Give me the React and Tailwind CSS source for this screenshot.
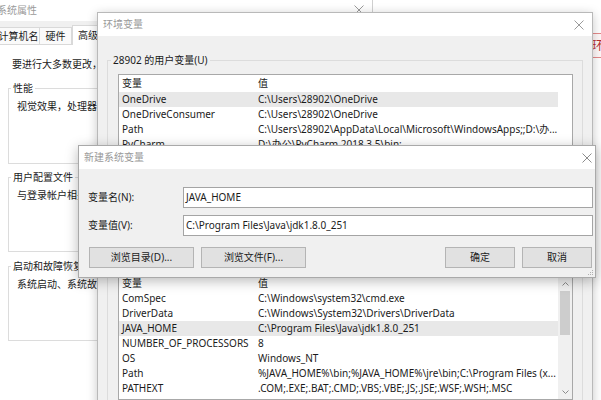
import React from 'react';

const userVars = [
  ['OneDrive', 'C:\\Users\\28902\\OneDrive', true],
  ['OneDriveConsumer', 'C:\\Users\\28902\\OneDrive'],
  ['Path', 'C:\\Users\\28902\\AppData\\Local\\Microsoft\\WindowsApps;;D:\\办...'],
  ['PyCharm', 'D:\\办公\\PyCharm 2018.3.5\\bin;'],
  ['TEMP', 'C:\\Users\\28902\\AppData\\Local\\Temp'],
  ['TMP', 'C:\\Users\\28902\\AppData\\Local\\Temp'],
];

const sysVars = [
  ['ComSpec', 'C:\\Windows\\system32\\cmd.exe'],
  ['DriverData', 'C:\\Windows\\System32\\Drivers\\DriverData'],
  ['JAVA_HOME', 'C:\\Program Files\\Java\\jdk1.8.0_251', true],
  ['NUMBER_OF_PROCESSORS', '8'],
  ['OS', 'Windows_NT'],
  ['Path', '%JAVA_HOME%\\bin;%JAVA_HOME%\\jre\\bin;C:\\Program Files (x...'],
  ['PATHEXT', '.COM;.EXE;.BAT;.CMD;.VBS;.VBE;.JS;.JSE;.WSF;.WSH;.MSC'],
  ['PROCESSOR_ARCHITECTURE', 'AMD64'],
];

const CloseX = ({ color = '#9a9a9a' }) => (
  <svg width="10" height="10" viewBox="0 0 10 10">
    <path d="M0.5 0.5L9.5 9.5M9.5 0.5L0.5 9.5" stroke={color} strokeWidth="1" />
  </svg>
);

const Scrollbar = () => (
  <div className="w-[14px] bg-[#f0f0f0] flex flex-col items-center">
    <div className="h-[15px] flex items-center justify-center">
      <svg width="7" height="4" viewBox="0 0 7 4"><path d="M0.5 3.5L3.5 0.5L6.5 3.5" stroke="#8a8a8a" fill="none" /></svg>
    </div>
    <div className="w-[10px] h-[44px] bg-[#cdcdcd]" />
    <div className="flex-1" />
    <div className="h-[15px] flex items-center justify-center">
      <svg width="7" height="4" viewBox="0 0 7 4"><path d="M0.5 0.5L3.5 3.5L6.5 0.5" stroke="#8a8a8a" fill="none" /></svg>
    </div>
  </div>
);

const VarList = ({ rows, className, scroll }) => (
  <div className={`flex border border-[#a8a8a8] bg-white overflow-hidden ${className}`}>
    <div className="w-[439px] shrink-0 flex flex-col">
      <div className="flex h-[17px] items-center">
        <div className="w-[136px] shrink-0 pl-[3px]">变量</div>
        <div className="pl-[3px] flex-1">值</div>
      </div>
      {rows.map(([n, v, sel]) => (
        <div key={n} className={`flex h-[15px] items-center whitespace-nowrap ${sel ? 'bg-[#e8e8e8]' : ''}`}>
          <div className="w-[136px] shrink-0 pl-[3px]">{n}</div>
          <div className="pl-[3px] flex-1 overflow-hidden">{v}</div>
        </div>
      ))}
    </div>
    {scroll ? <Scrollbar /> : <div className="flex-1" />}
  </div>
);

const Btn = ({ children, className }) => (
  <div className={`h-[21px] flex items-center justify-center bg-[#e1e1e1] border border-[#b4b4b4] ${className}`}>{children}</div>
);

// legend sits after the fieldset's left padding, so pull it back with legendCls
const Group = ({ label, className, legendCls, children }) => (
  <fieldset className={`border border-[#dcdcdc] ${className}`}>
    <legend className={`px-[2px] leading-[15px] ${legendCls}`}>{label}</legend>
    {children}
  </fieldset>
);

export default function App() {
  return (
    <div className="relative w-[601px] h-[400px] overflow-hidden bg-white text-[10px] leading-[15px] text-[#1b1b1b] font-['Noto_Sans','Noto_Sans_CJK_SC',sans-serif]">
      {/* page behind, top right */}
      <div className="absolute left-[588px] top-[33px] w-[40px] h-[25px] border border-[#e58a8a] bg-[#fff8f8] flex items-center pl-[3px] text-[12px] text-[#b83030]">环境</div>

      {/* 系统属性 */}
      <div className="absolute left-[-10px] top-[-2px] w-[383px] h-[420px] bg-[#f0f0f0] border border-[#d0d0d0] flex flex-col">
        <div className="h-[22px] shrink-0 bg-white flex items-center justify-between pl-[6px] pr-[8px]">
          <span className="text-[#9a9a9a]">系统属性</span>
          <CloseX />
        </div>
        <div className="h-[23px] shrink-0 flex items-end pl-[6px]">
          <div className="w-[43px] h-[17px] border border-b-0 border-[#d9d9d9] bg-[#fafafa] flex items-center justify-center">计算机名</div>
          <div className="w-[32px] h-[17px] border border-l-0 border-b-0 border-[#d9d9d9] bg-[#fafafa] flex items-center justify-center">硬件</div>
          <div className="relative w-[50px] h-[20px] -mb-px border border-b-0 border-[#d9d9d9] bg-white flex items-center pl-[5px]">高级</div>
        </div>
        <div className="flex-1 bg-white border-t border-[#d9d9d9] mr-[8px] px-[17px] pt-[12px]">
          <div className="whitespace-nowrap ml-[4px]">要进行大多数更改，你必须作为管理员登录。</div>
          <Group label="性能" className="mt-[9px] h-[83px] pl-[8px]" legendCls="-ml-[6px]">
            <div className="mt-[3px] whitespace-nowrap">视觉效果，处理器计划，内存使用，以及虚拟内存</div>
          </Group>
          <Group label="用户配置文件" className="mt-[6px] h-[82px] pl-[8px]" legendCls="-ml-[6px]">
            <div className="mt-[3px] whitespace-nowrap">与登录帐户相关的桌面设置</div>
          </Group>
          <Group label="启动和故障恢复" className="mt-[7px] h-[82px] pl-[8px]" legendCls="-ml-[6px]">
            <div className="mt-[3px] whitespace-nowrap">系统启动、系统故障和调试信息</div>
          </Group>
        </div>
      </div>

      {/* 环境变量 */}
      <div className="absolute left-[97px] top-[12px] w-[496px] h-[420px] bg-[#f0f0f0] border border-[#b9b9b9] shadow-[0_2px_10px_rgba(0,0,0,0.22)] flex flex-col">
        <div className="h-[23px] shrink-0 bg-white flex items-center justify-between pl-[5px] pr-[8px]">
          <span className="text-[#9a9a9a]">环境变量</span>
          <CloseX />
        </div>
        <Group label="28902 的用户变量(U)" className="mx-[9px] mt-[17px] pl-[10px] pr-[9px] pb-[9px]" legendCls="-ml-[7px]">
          <VarList rows={userVars} className="mt-[6px] h-[127px]" />
          <div className="mt-[8px] flex justify-end gap-[7px]">
            <Btn className="w-[70px]">新建(N)...</Btn>
            <Btn className="w-[70px]">编辑(E)...</Btn>
            <Btn className="w-[70px]">删除(D)</Btn>
          </div>
        </Group>
        <Group label="系统变量(S)" className="mx-[9px] mt-[8px] pl-[10px] pr-[9px] pb-[9px]" legendCls="-ml-[7px]">
          <VarList rows={sysVars} scroll className="mt-[12px] h-[125px]" />
        </Group>
      </div>

      {/* 新建系统变量 */}
      <div className="absolute left-[78px] top-[145px] w-[518px] h-[133px] bg-[#f0f0f0] border border-[#a9a9a9] shadow-[0_3px_12px_rgba(0,0,0,0.28)] flex flex-col">
        <div className="h-[23px] shrink-0 bg-white flex items-center justify-between pl-[5px] pr-[3px]">
          <span className="text-[#9a9a9a]">新建系统变量</span>
          <CloseX color="#8c8c8c" />
        </div>
        <div className="flex-1 flex flex-col pl-[9px] pr-[2px] pt-[18px]">
          <div className="flex items-center">
            <div className="w-[95px] shrink-0">变量名(N):</div>
            <div className="w-[410px] h-[21px] border border-[#a4a4a4] bg-white flex items-center pl-[2px]">JAVA_HOME</div>
          </div>
          <div className="flex items-center mt-[7px]">
            <div className="w-[95px] shrink-0">变量值(V):</div>
            <div className="w-[410px] h-[21px] border border-[#a4a4a4] bg-white flex items-center pl-[2px]">C:\Program Files\Java\jdk1.8.0_251</div>
          </div>
          <div className="flex items-center mt-[11px] pl-[1px]">
            <Btn className="w-[105px]">浏览目录(D)...</Btn>
            <Btn className="w-[105px] ml-[7px]">浏览文件(F)...</Btn>
            <div className="flex-1" />
            <Btn className="w-[70px]">确定</Btn>
            <Btn className="w-[70px] ml-[7px] mr-[1px]">取消</Btn>
          </div>
        </div>
        <svg className="absolute right-[1px] bottom-[1px]" width="7" height="7" viewBox="0 0 7 7">
          <rect x="5" y="1" width="1" height="1" fill="#b0b0b0" />
          <rect x="3" y="3" width="1" height="1" fill="#b0b0b0" />
          <rect x="5" y="3" width="1" height="1" fill="#b0b0b0" />
          <rect x="1" y="5" width="1" height="1" fill="#b0b0b0" />
          <rect x="3" y="5" width="1" height="1" fill="#b0b0b0" />
          <rect x="5" y="5" width="1" height="1" fill="#b0b0b0" />
        </svg>
      </div>
    </div>
  );
}
